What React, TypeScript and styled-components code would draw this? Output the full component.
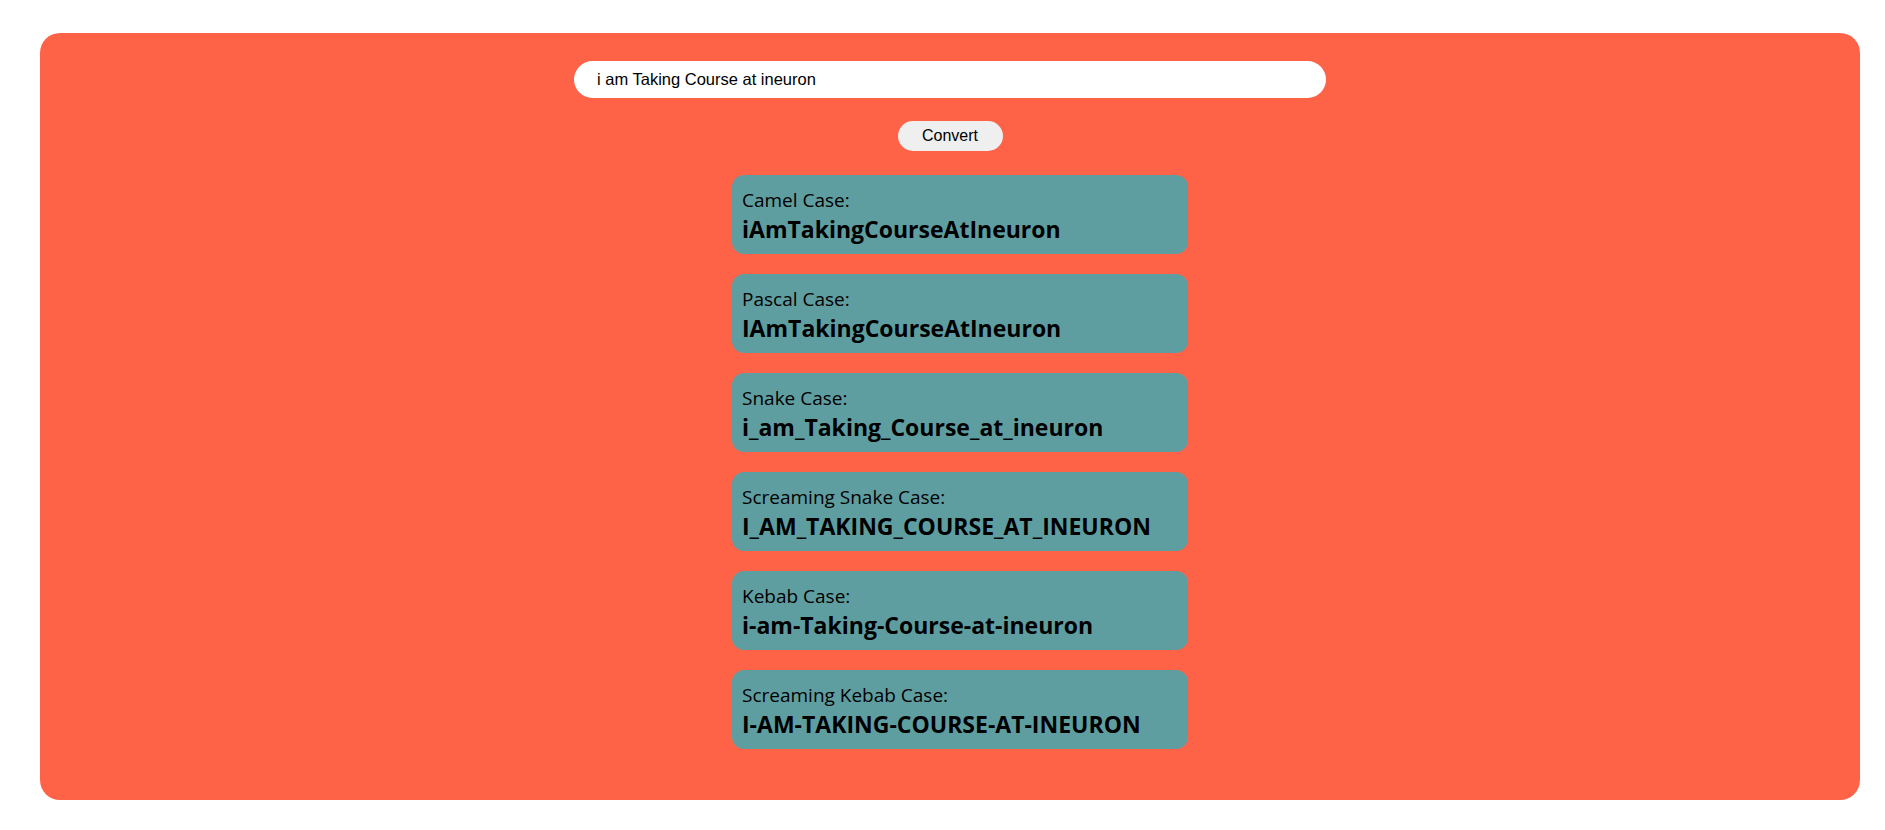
import * as React from 'react';
import styled, { createGlobalStyle } from 'styled-components';

const GlobalStyle = createGlobalStyle`
  html, body {
    margin: 0;
    padding: 0;
    background: #ffffff;
  }
`;

const Page = styled.div`
  padding: 33px 25px 30px 40px;
`;

const Panel = styled.main`
  background: tomato;
  border-radius: 20px;
  height: 767px;
  box-sizing: border-box;
  padding-top: 28px;
  display: flex;
  flex-direction: column;
  align-items: center;
`;

const SearchInput = styled.input`
  width: 752px;
  height: 37px;
  box-sizing: border-box;
  border: none;
  outline: none;
  border-radius: 19px;
  padding: 0 23px;
  font-family: 'Liberation Sans', Arial, sans-serif;
  font-size: 16.5px;
  color: #000;
  background: #fff;
`;

const ConvertButton = styled.button`
  margin-top: 23px;
  width: 105px;
  height: 30px;
  border: none;
  border-radius: 15px;
  background: #efefef;
  font-family: 'Liberation Sans', Arial, sans-serif;
  font-size: 16px;
  color: #000;
  cursor: pointer;
`;

const Results = styled.div`
  margin-top: 24px;
  margin-left: 20px;
  display: flex;
  flex-direction: column;
  gap: 20px;
`;

const Card = styled.div`
  width: 456px;
  height: 79px;
  box-sizing: border-box;
  background: cadetblue;
  border-radius: 12px;
  padding: 12px 10px 0;
  font-family: 'Open Sans', 'Noto Sans', sans-serif;
  color: #000;
`;

const Label = styled.div`
  font-size: 19px;
  line-height: 26px;
`;

const Value = styled.div`
  font-size: 23px;
  font-weight: 700;
  line-height: 32px;
  white-space: nowrap;
`;

const splitWords = (s: string) => s.trim().split(/\s+/).filter(Boolean);
const cap = (w: string) => w.charAt(0).toUpperCase() + w.slice(1);

const converters: { title: string; fn: (s: string) => string }[] = [
  {
    title: 'Camel Case:',
    fn: (s) => splitWords(s).map((w, i) => (i === 0 ? w : cap(w))).join(''),
  },
  { title: 'Pascal Case:', fn: (s) => splitWords(s).map(cap).join('') },
  { title: 'Snake Case:', fn: (s) => splitWords(s).join('_') },
  { title: 'Screaming Snake Case:', fn: (s) => splitWords(s).join('_').toUpperCase() },
  { title: 'Kebab Case:', fn: (s) => splitWords(s).join('-') },
  { title: 'Screaming Kebab Case:', fn: (s) => splitWords(s).join('-').toUpperCase() },
];

export default function App() {
  const [text, setText] = React.useState('i am Taking Course at ineuron');
  const [source, setSource] = React.useState('i am Taking Course at ineuron');

  return (
    <Page>
      <GlobalStyle />
      <Panel>
        <SearchInput value={text} onChange={(e) => setText(e.target.value)} />
        <ConvertButton onClick={() => setSource(text)}>Convert</ConvertButton>
        <Results>
          {converters.map((c) => (
            <Card key={c.title}>
              <Label>{c.title}</Label>
              <Value>{c.fn(source)}</Value>
            </Card>
          ))}
        </Results>
      </Panel>
    </Page>
  );
}
